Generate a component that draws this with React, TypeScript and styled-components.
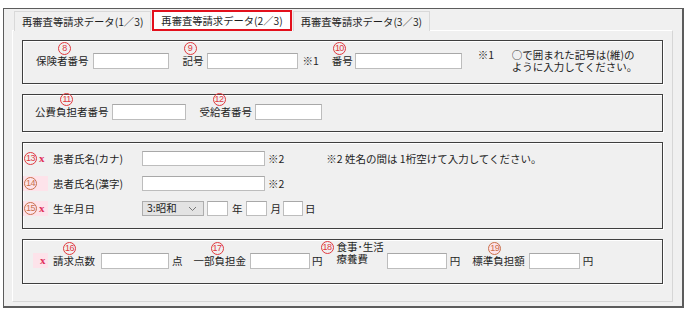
import styled, { createGlobalStyle } from "styled-components";
import React from "react";

const GlobalStyle = createGlobalStyle`
  body {
    margin: 0;
    background: #fff;
    font-family: "Noto Sans CJK JP", "Noto Sans", sans-serif;
    font-size: 10.5px;
    color: #1e1e1e;
  }
`;

const RED = "#e0393e";
const BROWN = "#c9704c";
const PINK = "#fde3ea";

export default function App() {
  return (
    <>
      <GlobalStyle />
      <SFrame>
        <STabBar>
          <STab>再審査等請求データ(1／3)</STab>
          <STab $active>再審査等請求データ(2／3)</STab>
          <STab>再審査等請求データ(3／3)</STab>
        </STabBar>
        <SPanel>
          {/* 保険者 */}
          <SGroup $h={44}>
            <SRow $pl={13}>
              <SLabel>
                <SBadge $x={22}>8</SBadge>保険者番号
              </SLabel>
              <SInput $w={76} $ml={4} />
              <SLabel $ml={14}>
                <SBadge $x={1}>9</SBadge>記号
              </SLabel>
              <SInput $w={91} $ml={3} />
              <SUnit $ml={5}>※1</SUnit>
              <SLabel $ml={13}>
                <SBadge $x={1}>10</SBadge>番号
              </SLabel>
              <SInput $w={107} $ml={2} />
              <SNote $ml={16}>
                <SNoteMark>※1</SNoteMark>
                <div>
                  <SNoteLine>○で囲まれた記号は(維)の</SNoteLine>
                  <SNoteLine>ように入力してください。</SNoteLine>
                </div>
              </SNote>
            </SRow>
          </SGroup>

          {/* 公費 */}
          <SGroup $h={38}>
            <SRow $pl={12}>
              <SLabel>
                <SBadge $x={25}>11</SBadge>公費負担者番号
              </SLabel>
              <SInput $w={74} $ml={3} />
              <SLabel $ml={14}>
                <SBadge $x={13}>12</SBadge>受給者番号
              </SLabel>
              <SInput $w={67} $ml={3} />
            </SRow>
          </SGroup>

          {/* 患者 */}
          <SGroup $h={87}>
            <SStack>
              <SLine>
                <SMarker>
                  <SCircle $color={RED}>13</SCircle>
                  <SRequired>x</SRequired>
                </SMarker>
                <SRowLabel>患者氏名(カナ)</SRowLabel>
                <SInput $w={123} $h={15} />
                <SUnit $ml={3}>※2</SUnit>
                <SUnit $ml={42}>※2 姓名の間は 1桁空けて入力してください。</SUnit>
              </SLine>
              <SLine>
                <SMarker $pink>
                  <SCircle $color={BROWN}>14</SCircle>
                </SMarker>
                <SRowLabel>患者氏名(漢字)</SRowLabel>
                <SInput $w={123} $h={15} />
                <SUnit $ml={3}>※2</SUnit>
              </SLine>
              <SLine>
                <SMarker $pink>
                  <SCircle $color={BROWN}>15</SCircle>
                  <SRequired>x</SRequired>
                </SMarker>
                <SRowLabel>生年月日</SRowLabel>
                <SSelect>
                  <span>3:昭和</span>
                  <svg width="9" height="6" viewBox="0 0 9 6">
                    <polyline points="1,1 4.5,4.5 8,1" fill="none" stroke="#777" strokeWidth="1" />
                  </svg>
                </SSelect>
                <SInput $w={21} $h={15} $ml={3} />
                <SUnit $ml={4}>年</SUnit>
                <SInput $w={21} $h={15} $ml={3} />
                <SUnit $ml={4}>月</SUnit>
                <SInput $w={20} $h={15} $ml={2} />
                <SUnit $ml={2}>日</SUnit>
              </SLine>
            </SStack>
          </SGroup>

          {/* 請求 */}
          <SGroup $h={45}>
            <SRow $pl={10}>
              <SMarker $pink $w={15} $pad={7}>
                <SRequired>x</SRequired>
              </SMarker>
              <SLabel $ml={5}>
                <SBadge $x={10}>16</SBadge>請求点数
              </SLabel>
              <SInput $w={68} $ml={6} />
              <SUnit $ml={3}>点</SUnit>
              <SLabel $ml={11}>
                <SBadge $x={17}>17</SBadge>一部負担金
              </SLabel>
              <SInput $w={60} $ml={4} />
              <SUnit $ml={2}>円</SUnit>
              <SLabel $ml={14} $raise>
                <SBadge $x={-16} $y={0}>18</SBadge>
                <SNoteLine>食事･生活</SNoteLine>
                <SNoteLine>療養費</SNoteLine>
              </SLabel>
              <SInput $w={60} $ml={3} />
              <SUnit $ml={3}>円</SUnit>
              <SLabel $ml={12}>
                <SBadge $x={16} $pink>19</SBadge>標準負担額
              </SLabel>
              <SInput $w={51} $ml={4} />
              <SUnit $ml={3}>円</SUnit>
            </SRow>
          </SGroup>
        </SPanel>
      </SFrame>
    </>
  );
}

const SFrame = styled.div`
  box-sizing: border-box;
  margin: 8px 0 0 3px;
  width: 681px;
  height: 300px;
  border: 1px solid #5c5c5c;
  border-right-width: 2px;
  border-bottom-width: 2px;
  background: #f0f0f0;
  padding-left: 8px;
`;

const STabBar = styled.div`
  display: flex;
  gap: 1px;
  height: 22px;
  padding-left: 2px;
`;

const STab = styled.div<{ $active?: boolean }>`
  box-sizing: border-box;
  display: flex;
  align-items: center;
  white-space: nowrap;
  font-size: 10.3px;
  margin-top: ${(p) => (p.$active ? 1 : 2)}px;
  height: ${(p) => (p.$active ? 21 : 20)}px;
  padding: 0 7px;
  border: ${(p) => (p.$active ? "2px solid #e3101c" : "1px solid #d9d9d9")};
  border-bottom: ${(p) => (p.$active ? "2px solid #e3101c" : "none")};
  background: ${(p) => (p.$active ? "#fff" : "#f0f0f0")};
  position: relative;
  z-index: ${(p) => (p.$active ? 1 : 0)};
`;

const SPanel = styled.div`
  box-sizing: border-box;
  margin-top: -1px;
  width: 661px;
  height: 272px;
  border: 1px solid #fff;
  border-right-color: #d6d6d6;
  border-bottom-color: #d6d6d6;
  background: #f0f0f0;
  padding: 9px 0 0 9px;
  display: flex;
  flex-direction: column;
  gap: 10px;
`;

const SGroup = styled.div<{ $h: number }>`
  box-sizing: border-box;
  width: 641px;
  height: ${(p) => p.$h}px;
  border: 1px solid #3f3f3f;
  box-shadow: 1px 1px 0 #fff, inset 1px 1px 0 #fff;
  display: flex;
`;

const SRow = styled.div<{ $pl: number }>`
  display: flex;
  align-items: center;
  flex: 1;
  padding-left: ${(p) => p.$pl}px;
  padding-bottom: 2px;
`;

const SStack = styled.div`
  display: flex;
  flex-direction: column;
  gap: 10px;
  padding: 8px 0 0 0;
`;

const SLine = styled.div`
  display: flex;
  align-items: center;
  height: 15px;
`;

const SMarker = styled.div<{ $pink?: boolean; $w?: number; $pad?: number }>`
  display: flex;
  align-items: center;
  gap: 2px;
  width: ${(p) => p.$w ?? 25}px;
  height: 15px;
  box-sizing: border-box;
  padding-left: ${(p) => p.$pad ?? 1}px;
  background: ${(p) => (p.$pink ? PINK : "transparent")};
`;

const SRowLabel = styled.span`
  margin-left: 5px;
  width: 89px;
  white-space: nowrap;
  line-height: 14px;
`;

const SLabel = styled.span<{ $ml?: number; $raise?: boolean }>`
  position: relative;
  display: ${(p) => (p.$raise ? "flex" : "inline")};
  flex-direction: column;
  margin-left: ${(p) => p.$ml ?? 0}px;
  margin-bottom: ${(p) => (p.$raise ? 16 : 0)}px;
  white-space: nowrap;
  line-height: 14px;
`;

const SCircle = styled.span<{ $color: string }>`
  box-sizing: border-box;
  display: inline-flex;
  align-items: center;
  justify-content: center;
  width: 13px;
  height: 13px;
  border: 1px solid ${(p) => p.$color};
  border-radius: 50%;
  color: ${(p) => p.$color};
  font-family: "Liberation Sans", sans-serif;
  font-size: 9px;
  letter-spacing: -0.6px;
  line-height: 1;
  flex: none;
`;

const SBadge = styled.span<{ $x: number; $y?: number; $pink?: boolean }>`
  position: absolute;
  left: ${(p) => p.$x}px;
  top: ${(p) => p.$y ?? -12}px;
  box-sizing: border-box;
  display: flex;
  align-items: center;
  justify-content: center;
  width: 13px;
  height: 13px;
  border: 1px solid ${(p) => (p.$pink ? BROWN : RED)};
  border-radius: 50%;
  color: ${(p) => (p.$pink ? BROWN : RED)};
  background: ${(p) => (p.$pink ? PINK : "transparent")};
  font-family: "Liberation Sans", sans-serif;
  font-size: 9px;
  letter-spacing: -0.6px;
  line-height: 1;
`;

const SRequired = styled.span`
  color: #e0305a;
  font-family: "Liberation Serif", serif;
  font-size: 11px;
  font-weight: bold;
  line-height: 1;
`;

const SInput = styled.input<{ $w: number; $h?: number; $ml?: number }>`
  box-sizing: border-box;
  width: ${(p) => p.$w}px;
  height: ${(p) => p.$h ?? 16}px;
  margin: 0 0 0 ${(p) => p.$ml ?? 0}px;
  padding: 0;
  border: 1px solid #bdbdbd;
  border-top-color: #a8a8a8;
  background: #fff;
  outline: none;
  flex: none;
`;

const SUnit = styled.span<{ $ml?: number }>`
  margin-left: ${(p) => p.$ml ?? 0}px;
  white-space: nowrap;
  line-height: 14px;
`;

const SSelect = styled.div`
  box-sizing: border-box;
  display: flex;
  align-items: center;
  justify-content: space-between;
  width: 62px;
  height: 15px;
  padding: 0 6px 0 4px;
  border: 1px solid #adadad;
  background: #e3e3e3;
  line-height: 1;
  flex: none;
`;

const SNote = styled.div<{ $ml: number }>`
  display: flex;
  margin-left: ${(p) => p.$ml}px;
  white-space: nowrap;
`;

const SNoteMark = styled.span`
  width: 34px;
  height: 12px;
  line-height: 12px;
`;

const SNoteLine = styled.div`
  height: 12px;
  line-height: 12px;
  overflow: visible;
`;
